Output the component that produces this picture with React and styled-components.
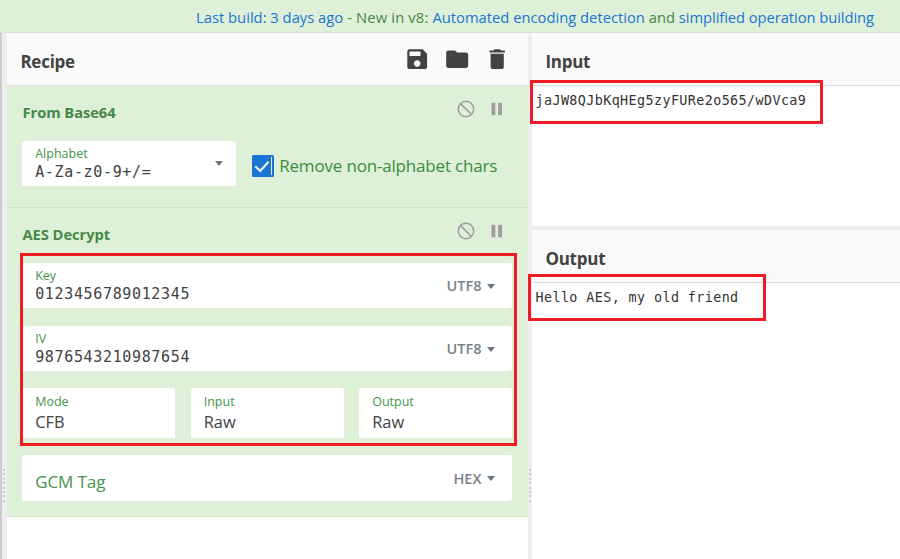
import React from 'react';
import styled, { createGlobalStyle } from 'styled-components';

const Global = createGlobalStyle`
  * { box-sizing: border-box; }
  body { margin: 0; background: #fff; overflow: hidden; font-family: "Open Sans", "Noto Sans", sans-serif; color: #424242; }
`;

const Page = styled.div`
  position: relative;
  width: 900px;
  height: 559px;
  display: flex;
  flex-direction: column;
  overflow: hidden;
`;

const Banner = styled.header`
  flex: none;
  height: 33px;
  padding: 3px 26px 0 0;
  background: #dff0d8;
  border-bottom: 1px solid #ddd;
  color: #468847;
  font-size: 14.75px;
  line-height: 29px;
  text-align: right;
  white-space: nowrap;
`;

const Link = styled.a`
  color: #1976d2;
  letter-spacing: ${p => p.$track || 0}px;
`;

const Version = styled.span`
  letter-spacing: 0.15px;
`;

const Workspace = styled.main`
  flex: 1;
  min-height: 0;
  display: grid;
  grid-template-columns: 2px 5px 521px 4px 1fr;
`;

const Edge = styled.div`
  background: #ccc;
`;

const Gutter = styled.div`
  display: flex;
  justify-content: center;
  padding-top: 436px;
  background: #eee;
`;

const Grip = styled.div`
  width: 2px;
  height: 33px;
  margin-left: ${p => p.$shift || 0}px;
  background: repeating-linear-gradient(#cacaca 0 2px, transparent 2px 4.4px);
`;

const Divider = styled.div`
  height: 4px;
  background: #eee;
`;

const DataColumn = styled.div`
  display: flex;
  flex-direction: column;
`;

const Pane = styled.section`
  display: flex;
  flex-direction: column;
  height: ${p => p.$height || 'auto'};
`;

const TitleBar = styled.div`
  flex: none;
  display: flex;
  align-items: center;
  justify-content: space-between;
  height: 53px;
  padding: 0 18px 0 13.4px;
  background: #fafafa;
  border-bottom: 1px solid #ddd;
`;

const Title = styled.h2`
  margin: 0;
  padding-top: 5px;
  font-size: 17px;
  line-height: 24px;
  font-weight: 700;
  letter-spacing: -0.25px;
`;

const Tools = styled.div`
  display: flex;
  gap: 13.6px;
`;

const ToolIcon = styled.svg`
  display: block;
  width: 26.4px;
  height: 26.4px;
  fill: #424242;
`;

const Operation = styled.article`
  height: ${p => p.$height}px;
  padding: 0 16px 0 15px;
  background: #dff0d8;
  border-bottom: 1px solid #d3e8c0;
`;

const OpHead = styled.div`
  display: flex;
  justify-content: space-between;
  height: 55px;
  padding: 14px 6.5px 0 0.5px;
`;

const OpName = styled.h3`
  margin: 0;
  padding-top: 2px;
  font-size: 14.7px;
  line-height: 20px;
  font-weight: 700;
  letter-spacing: -0.05px;
  color: #468847;
`;

const OpActions = styled.div`
  display: flex;
  align-items: center;
  gap: 13px;
  height: 18px;
`;

const OpIcon = styled.svg`
  display: block;
  width: 18px;
  height: 18px;
  fill: none;
  stroke: #9e9e9e;
`;

const Row = styled.div`
  display: flex;
  gap: ${p => p.$gap || 16}px;
  margin-bottom: ${p => p.$below || 0}px;
`;

const Field = styled.div`
  flex: ${p => (p.$width ? 'none' : 1)};
  width: ${p => (p.$width ? `${p.$width}px` : 'auto')};
  height: ${p => p.$height || 45}px;
  display: flex;
  align-items: center;
  justify-content: space-between;
  padding: 0 ${p => p.$end || 17.5}px 0 13.2px;
  background: #fff;
  border-radius: 3px 3px ${p => (p.$button ? '3px' : '0')} 0;
`;

const FieldText = styled.div`
  align-self: flex-start;
  padding-top: ${p => p.$top || 5}px;
`;

const Label = styled.div`
  font-size: 12.5px;
  line-height: 16px;
  color: #43954a;
`;

const MonoValue = styled.div`
  font-family: "DejaVu Sans Mono", monospace;
  font-size: 15px;
  line-height: 20px;
  letter-spacing: 0.65px;
  white-space: nowrap;
`;

const Value = styled.div`
  font-size: 16.4px;
  line-height: 24px;
`;

const Placeholder = styled.div`
  height: 26px;
  margin-top: 6px;
  font-size: 17px;
  line-height: 28px;
  letter-spacing: -0.1px;
  color: #43954a;
`;

const Encoding = styled.button`
  display: flex;
  align-items: center;
  gap: 5px;
  padding: 1px 0 0;
  border: 0;
  background: none;
  font: 600 14.5px/20px "Open Sans", sans-serif;
  color: #78818a;
`;

const Caret = styled.span`
  width: 0;
  height: 0;
  border: 4.5px solid transparent;
  border-top: 5px solid #6c757d;
  border-bottom: 0;
`;

const CheckLabel = styled.label`
  display: flex;
  align-items: center;
  gap: 5.2px;
  padding-top: 5px;
  font-size: 17px;
  letter-spacing: -0.18px;
  line-height: 22px;
  color: #388e3c;
`;

const CheckBox = styled.svg`
  display: block;
  width: 22px;
  height: 22px;
`;

const Data = styled.pre`
  margin: 0;
  padding: 5px 3.5px;
  font-family: "DejaVu Sans Mono", monospace;
  font-size: 13.4px;
  line-height: 20px;
  letter-spacing: 0.4px;
  color: #333;
`;

const Highlight = styled.div`
  position: absolute;
  left: ${p => p.$x}px;
  top: ${p => p.$y}px;
  width: ${p => p.$w}px;
  height: ${p => p.$h}px;
  border: 3px solid #ee1c25;
  pointer-events: none;
`;

const TOOLS = [
  'M17 3H5a2 2 0 0 0-2 2v14a2 2 0 0 0 2 2h14c1.1 0 2-.9 2-2V7l-4-4zm-5 16c-1.66 0-3-1.34-3-3s1.34-3 3-3 3 1.34 3 3-1.34 3-3 3zm3-10H5V5h10v4z',
  'M10 4H4c-1.1 0-1.99.9-1.99 2L2 18c0 1.1.9 2 2 2h16c1.1 0 2-.9 2-2V8c0-1.1-.9-2-2-2h-8l-2-2z',
  'M6 19c0 1.1.9 2 2 2h8c1.1 0 2-.9 2-2V7H6v12zM19 4h-3.5l-1-1h-5l-1 1H5v2h14V4z',
];

function OperationHead({ name }) {
  return (
    <OpHead>
      <OpName>{name}</OpName>
      <OpActions>
        <OpIcon viewBox="0 0 18 18" strokeWidth="1.5">
          <circle cx="9" cy="9" r="7.7" />
          <path d="M3.6 3.6l10.8 10.8" />
        </OpIcon>
        <OpIcon viewBox="0 0 18 18" strokeWidth="3.8">
          <path d="M5.4 2.8v12.4M12.1 2.8v12.4" />
        </OpIcon>
      </OpActions>
    </OpHead>
  );
}

function KeyField({ label, value, encoding }) {
  return (
    <Field $button>
      <FieldText>
        <Label>{label}</Label>
        <MonoValue>{value}</MonoValue>
      </FieldText>
      <Encoding>{encoding}<Caret /></Encoding>
    </Field>
  );
}

function OptionField({ label, value }) {
  return (
    <Field $width={153} $height={50}>
      <FieldText $top={6}>
        <Label>{label}</Label>
        <Value>{value}</Value>
      </FieldText>
    </Field>
  );
}

export default function App() {
  return (
    <Page>
      <Global />
      <Banner>
        <Link>Last build: 3 days ago</Link><Version> - New in v8: </Version>
        <Link>Automated encoding detection</Link> and{' '}
        <Link $track={-0.07}>simplified operation building</Link>
      </Banner>
      <Workspace>
        <Edge />
        <Gutter><Grip $shift={-1} /></Gutter>
        <Pane>
          <TitleBar>
            <Title>Recipe</Title>
            <Tools>
              {TOOLS.map(d => <ToolIcon key={d} viewBox="0 0 24 24"><path d={d} /></ToolIcon>)}
            </Tools>
          </TitleBar>
          <Operation $height={122}>
            <OperationHead name="From Base64" />
            <Row>
              <Field $width={214} $end={13}>
                <FieldText>
                  <Label>Alphabet</Label>
                  <MonoValue>A-Za-z0-9+/=</MonoValue>
                </FieldText>
                <Caret />
              </Field>
              <CheckLabel>
                <CheckBox viewBox="0 0 22 22">
                  <rect width="22" height="22" rx="1.5" fill="#1976d2" />
                  <path d="M3.3 11.3l4.9 4.7 8.3-9.2" fill="none" stroke="#eaf5e6" strokeWidth="2.2" />
                  <path d="M19.5 2v18" stroke="#dff0d8" strokeWidth="1" />
                </CheckBox>
                Remove non-alphabet chars
              </CheckLabel>
            </Row>
          </Operation>
          <Operation $height={309}>
            <OperationHead name="AES Decrypt" />
            <Row $below={18}><KeyField label="Key" value="0123456789012345" encoding="UTF8" /></Row>
            <Row $below={17}><KeyField label="IV" value="9876543210987654" encoding="UTF8" /></Row>
            <Row $below={17} $gap={15.5}>
              <OptionField label="Mode" value="CFB" />
              <OptionField label="Input" value="Raw" />
              <OptionField label="Output" value="Raw" />
            </Row>
            <Row>
              <Field $height={46} $button>
                <Placeholder>GCM Tag</Placeholder>
                <Encoding>HEX<Caret /></Encoding>
              </Field>
            </Row>
          </Operation>
        </Pane>
        <Gutter><Grip /></Gutter>
        <DataColumn>
          <Pane $height="193px">
            <TitleBar><Title>Input</Title></TitleBar>
            <Data>jaJW8QJbKqHEg5zyFURe2o565/wDVca9</Data>
          </Pane>
          <Divider />
          <Pane>
            <TitleBar><Title>Output</Title></TitleBar>
            <Data>Hello AES, my old friend</Data>
          </Pane>
        </DataColumn>
      </Workspace>
      <Highlight $x={530} $y={80} $w={293} $h={44} />
      <Highlight $x={528} $y={274} $w={238} $h={47} />
      <Highlight $x={20} $y={253} $w={497} $h={193} />
    </Page>
  );
}
